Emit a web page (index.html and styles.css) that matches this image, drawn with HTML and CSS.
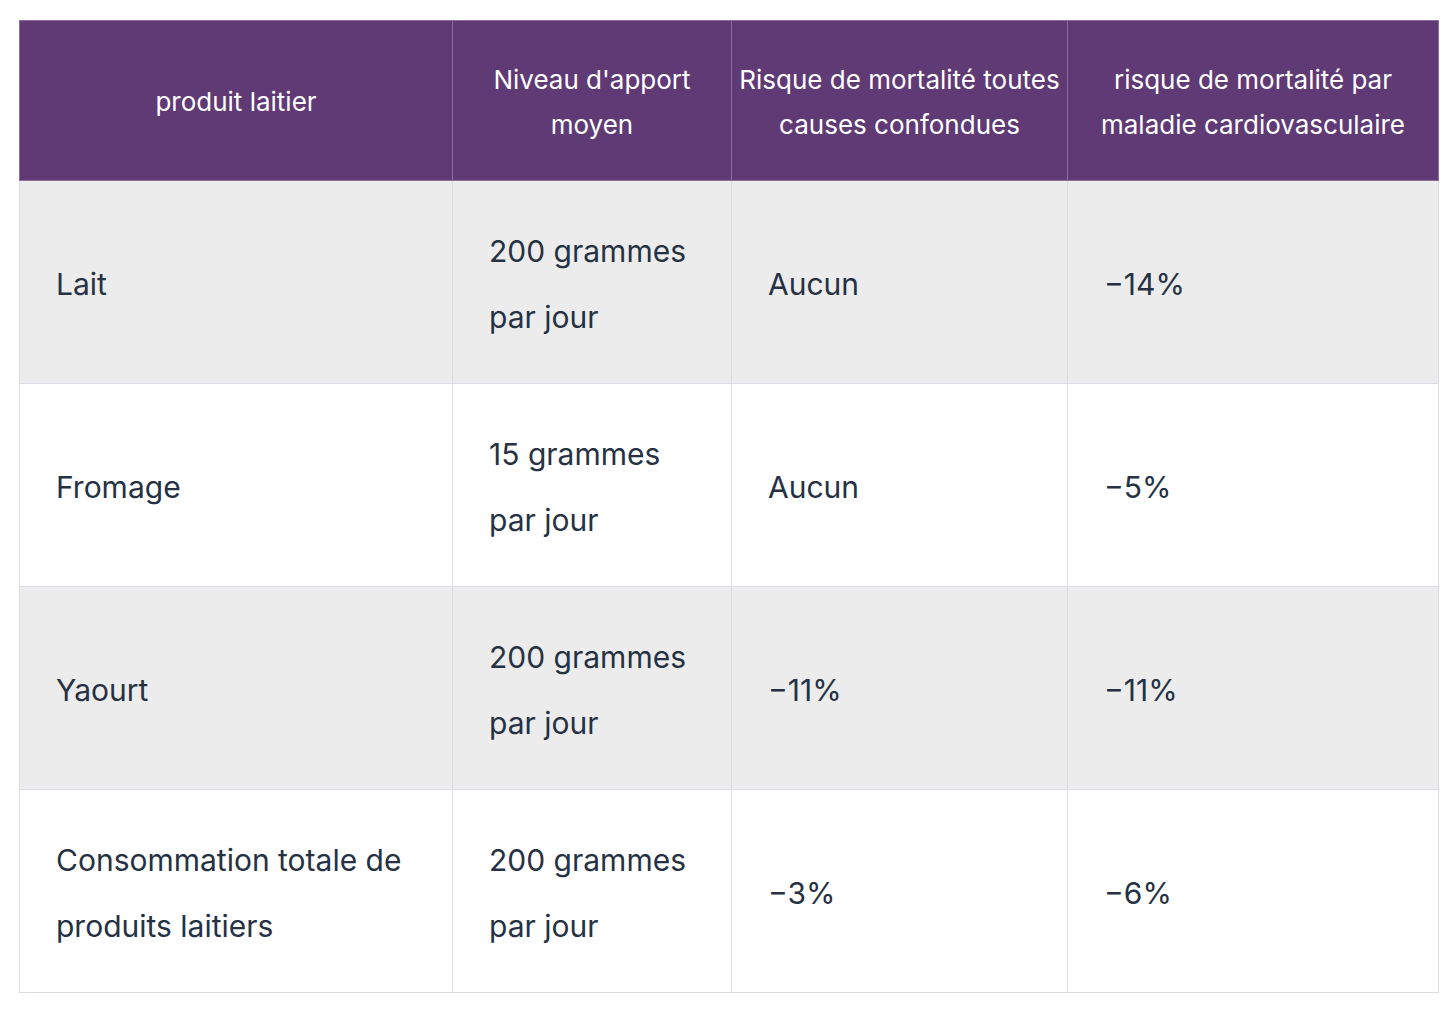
FILE: index.html
```html
<!DOCTYPE html>
<html lang="fr">
<head>
<meta charset="utf-8">
<title>Produits laitiers</title>
<link rel="stylesheet" href="styles.css">
</head>
<body>
<div class="page">
  <table class="data">
    <colgroup>
      <col class="c1"><col class="c2"><col class="c3"><col class="c4">
    </colgroup>
    <thead>
      <tr>
        <th>produit laitier</th>
        <th>Niveau d'apport moyen</th>
        <th class="tight">Risque de mortalité toutes causes confondues</th>
        <th class="tight">risque de mortalité par maladie cardiovasculaire</th>
      </tr>
    </thead>
    <tbody>
      <tr class="alt">
        <td>Lait</td>
        <td>200 grammes par jour</td>
        <td>Aucun</td>
        <td>−14%</td>
      </tr>
      <tr>
        <td>Fromage</td>
        <td>15 grammes par jour</td>
        <td>Aucun</td>
        <td>−5%</td>
      </tr>
      <tr class="alt">
        <td>Yaourt</td>
        <td>200 grammes par jour</td>
        <td>−11%</td>
        <td>−11%</td>
      </tr>
      <tr>
        <td>Consommation totale de produits laitiers</td>
        <td>200 grammes par jour</td>
        <td>−3%</td>
        <td>−6%</td>
      </tr>
    </tbody>
  </table>
</div>
</body>
</html>
```

FILE: styles.css
```css
html, body {
  margin: 0;
  background: #ffffff;
}
.page {
  padding: 20px 0 0 19px;
}
.data {
  border-collapse: collapse;
  width: 1419px;
  table-layout: fixed;
  font-family: Inter, "Liberation Sans", sans-serif;
}
.c1 { width: 433px; }
.c2 { width: 279px; }
.c3 { width: 336px; }
.c4 { width: 371px; }
.data th {
  background: #5f3a75;
  color: #ffffff;
  font-weight: 400;
  font-size: 26px;
  line-height: 45px;
  height: 160px;
  padding: 2px 4px 0;
  text-align: center;
  vertical-align: middle;
  border: 1px solid #8b6d9e;
  box-sizing: border-box;
}
.data th.tight {
  letter-spacing: 0;
}
.data td {
  color: #263143;
  font-size: 30px;
  line-height: 66px;
  height: 203px;
  padding: 4px 24px 0 36px;
  vertical-align: middle;
  border: 1px solid #d9dce2;
  box-sizing: border-box;
}
.data tr.alt td {
  background: #ececec;
}
```
